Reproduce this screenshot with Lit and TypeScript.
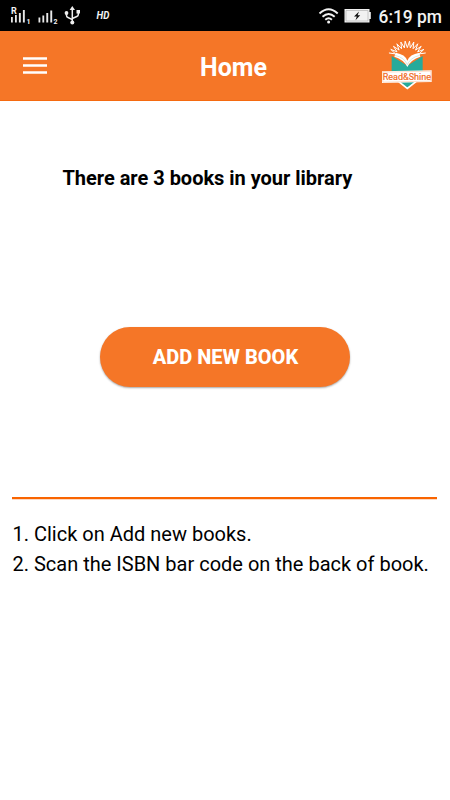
import { LitElement, html, css, svg } from "lit";
import { customElement, property } from "lit/decorators.js";

@customElement("status-bar")
class StatusBar extends LitElement {
  static styles = css`
    :host { display: flex; height: 31px; background: #000; color: #fff; }
    svg { display: block; width: 450px; height: 31px; }
    text { fill: #f2f2f2; font-family: Roboto, sans-serif; }
    .time { font-size: 18px; font-weight: 500; }
    .hd { font-size: 10px; font-weight: 700; font-style: italic; }
    .tiny { font-size: 7px; font-weight: 700; }
    .roam { font-size: 9px; font-weight: 700; }
  `;
  render() {
    return html`<svg viewBox="0 0 450 31">
      <g fill="#e8e8e8">
        <path d="M11 17h1.800v5.500h-1.800zM15 15h1.800v7.500h-1.800zM18.900 13h1.900v9.500h-1.900zM22.900 10h1.900v12.500h-1.900z" />
        <path d="M38.500 17.500h1.800v5h-1.800zM42.400 15.500h1.800v7h-1.800zM46.300 13h1.900v9.500h-1.900zM50.300 10.500h1.900v12h-1.900z" />
      </g>
      <text class="roam" x="11" y="13.800">R</text>
      <text class="tiny" x="26.500" y="23.500">1</text>
      <text class="tiny" x="53.500" y="23.500">2</text>
      <g fill="none" stroke="#eee" stroke-width="1.500">
        <path d="M72.300 9v13M66.500 13v2.500q0 1.500 1.500 2l4.300 2.200M78.300 12.500v2q0 1.500-1.500 2l-4.500 2" />
      </g>
      <g fill="#eee">
        <path d="M72.300 6l2.700 4h-5.400zM76.500 10h3.500v3.500h-3.500z" />
        <circle cx="66.500" cy="13" r="1.900" /><circle cx="72.300" cy="22.500" r="2" />
      </g>
      <text class="hd" x="96.500" y="19" textLength="12.800" lengthAdjust="spacingAndGlyphs">HD</text>
      <g fill="none" stroke="#f2f2f2" stroke-width="1.900">
        <path d="M319.500 13.500q9.100-8.500 18.200 0M322.500 16.800q6.100-5.600 12.200 0M325.300 19.800q3.300-3 6.600 0" />
      </g>
      <circle cx="328.600" cy="22" r="1.500" fill="#f2f2f2" />
      <path d="M344.500 9h25v3h1.300v7h-1.300v3.500h-25z" fill="#f2f2f2" />
      <path d="M346 10.500h22v10.500h-22z" fill="none" stroke="#aaa" stroke-width=".6" />
      <path d="M359 11.500l-5 5h2.800l-1.300 3.700 4.700-5h-2.600z" fill="#111" />
      <text class="time" x="378.500" y="22.500" textLength="63.500" lengthAdjust="spacingAndGlyphs">6:19 pm</text>
    </svg>`;
  }
}

@customElement("brand-logo")
class BrandLogo extends LitElement {
  static styles = css`
    :host { display: block; width: 52px; height: 51px; }
    svg { display: block; width: 52px; height: 51px; overflow: visible; }
    text { font: 400 27px Roboto, sans-serif; fill: #f0681c; stroke: #f0681c; stroke-width: .5px; }
  `;
  render() {
    const count = 12;
    const points: string[] = [];
    for (let i = 0; i < count * 2 - 1; i++) {
      const a = ((-162 + (i * 144) / (count * 2 - 2)) * Math.PI) / 180;
      const outer = i % 2 === 0;
      const rx = outer ? 58 : 39;
      const ry = outer ? 52 : 32;
      points.push(`${(112 + rx * Math.cos(a)).toFixed(1)},${(85 + ry * Math.sin(a)).toFixed(1)}`);
    }
    return html`<svg viewBox="33 27 156 153">
      ${svg`<polyline points="${points.join(" ")}" fill="none" stroke="#fff" stroke-width="3" stroke-linejoin="round" />`}
      <path d="M65 78l47 29 46-29v76h-21l-25 19-25-19H65z" fill="#26aa9b" />
      <path d="M77 68q29 5 35 24 7-19 36-24l3 12q-29 9-39 31-10-22-39-31z" fill="#fff" />
      <path d="M75 76q29 7 37 28 9-21 37-28" fill="none" stroke="#a8d5cb" stroke-width="1.500" />
      <path d="M86 155l26 20 26-20" fill="none" stroke="#fff" stroke-width="5" />
      <path d="M36 124l149-3v35l-149 3z" fill="#fff" />
      <path d="M38.500 126.500l144-3v30l-144 3z" fill="none" stroke="#f8ab7c" stroke-width="1.200" />
      <text x="38" y="150.500" textLength="145" lengthAdjust="spacingAndGlyphs">Read&amp;Shine</text>
    </svg>`;
  }
}

@customElement("app-root")
class AppRoot extends LitElement {
  @property({ type: Number }) count = 3;
  static styles = css`
    :host { display: flex; flex-direction: column; height: 800px; background: #fff; color: #000; font-family: Roboto, sans-serif; overflow: hidden; }
    header { box-sizing: border-box; height: 70px; background: #f57627; border-bottom: 1px solid #f56a10; display: grid; grid-template-columns: 178px 1fr auto; align-items: center; padding: 0 17px 0 23px; color: #fff; }
    .menu { display: block; width: 24px; height: 17px; }
    h1 { margin: 4px 0 0 -1px; font-size: 25px; line-height: 30px; font-weight: 700; }
    brand-logo { justify-self: end; margin-bottom: 2px; }
    main { display: flex; flex-direction: column; }
    .summary { margin: 65px 0 0 62.500px; font-size: 20px; line-height: 24px; font-weight: 700; letter-spacing: -.02px; white-space: nowrap; }
    button { align-self: center; margin-top: 137px; width: 250px; height: 60px; border: 0; border-radius: 30px; background: #f57627; color: #fff; font: 800 20px Roboto, sans-serif; box-shadow: 0 1px 2px rgba(0,0,0,.35); padding: 0 0 0 1px; }
    hr { width: 425px; height: 2px; border: 0; background: #f96400; box-shadow: 0 1px #fdd9c3; margin: 110px 0 0 12.400px; }
    ol { list-style: none; margin: 20px 0 0 12.500px; padding: 0; font-size: 20px; line-height: 30px; white-space: nowrap; }
  `;
  render() {
    return html`
      <status-bar></status-bar>
      <header>
        <svg class="menu" viewBox="0 0 24 17"><path d="M0 1.500h24M0 8.500h24M0 15.500h24" stroke="#fff" stroke-width="2.600" /></svg>
        <h1>Home</h1>
        <brand-logo></brand-logo>
      </header>
      <main>
        <div class="summary">There are ${this.count} books in your library</div>
        <button>ADD NEW BOOK</button>
        <hr />
        <ol>
          <li>1. Click on Add new books.</li>
          <li>2. Scan the ISBN bar code on the back of book.</li>
        </ol>
      </main>`;
  }
}
